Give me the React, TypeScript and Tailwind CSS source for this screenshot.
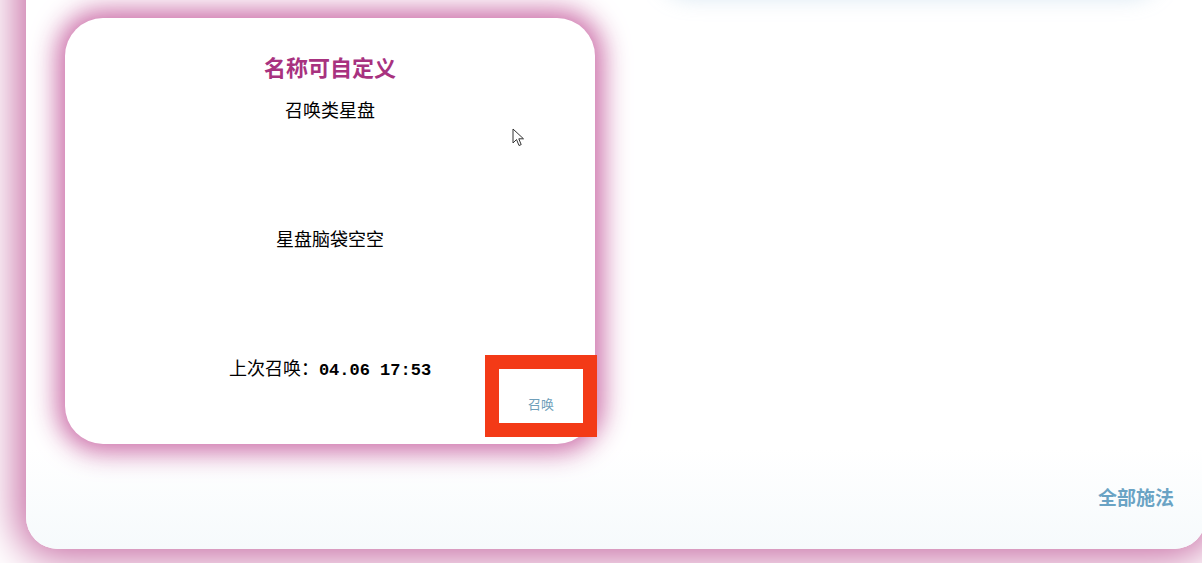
import React from "react";

const cjk = '"Noto Sans CJK SC", "Noto Sans", sans-serif';

function Cursor() {
  return (
    <svg className="absolute left-[512px] top-[128px]" width="14" height="20" viewBox="0 0 14 20">
      <path d="M1 1 L1 15 L4.5 11.5 L7 17.5 L9.2 16.6 L6.8 10.8 L11.5 10.8 Z" fill="#ffffff" stroke="#333333" strokeWidth="1" strokeLinejoin="round" />
    </svg>
  );
}

export default function App() {
  return (
    <div className="relative w-[1202px] h-[563px] overflow-hidden bg-white" style={{ fontFamily: cjk }}>
      <div className="ml-[26px] -mt-[120px] w-[1180px] h-[669px] rounded-[32px] bg-gradient-to-b from-white from-85% to-[#f6fafc] shadow-[0_0_40px_10px_rgba(200,110,165,1)] flex flex-col pt-[20px] pl-[39px] pr-[32px]">
        <div className="grid grid-cols-[530px_500px] gap-x-[65px] gap-y-[21px]">
          <div className="h-[97px]" />
          <div className="h-[97px] rounded-[30px] bg-white shadow-[0_0_22px_rgba(150,190,220,0.4)]" />
          <div className="relative h-[426px] rounded-[38px] bg-white shadow-[0_0_26px_8px_rgba(200,100,162,0.95)] flex flex-col items-center pt-[34px]">
            <div className="text-[22px] leading-[28px] font-bold text-[#a8327f]">名称可自定义</div>
            <div className="mt-[17px] text-[18px] leading-[24px] text-black">召唤类星盘</div>
            <div className="mt-[105px] text-[18px] leading-[24px] text-black">星盘脑袋空空</div>
            <div className="relative mt-[105px] w-full flex justify-center">
              <div className="text-[18px] leading-[24px] text-black flex items-baseline">
                <span>上次召唤：</span>
                <span className="text-[17px] font-bold" style={{ fontFamily: '"Liberation Mono", monospace' }}>04.06 17:53</span>
              </div>
              <button className="absolute right-[-2px] top-0 w-[112px] h-[82px] border-[14px] border-[#f33a17] bg-white flex items-end justify-center pb-[11px]">
                <span className="text-[13px] leading-[16px] text-[#6f9fba]">召唤</span>
              </button>
            </div>
          </div>
        </div>
        <div className="mt-auto mb-[39px] flex justify-end">
          <span className="text-[19px] leading-[26px] font-bold text-[#6aa3c4]">全部施法</span>
        </div>
      </div>
      <Cursor />
    </div>
  );
}
